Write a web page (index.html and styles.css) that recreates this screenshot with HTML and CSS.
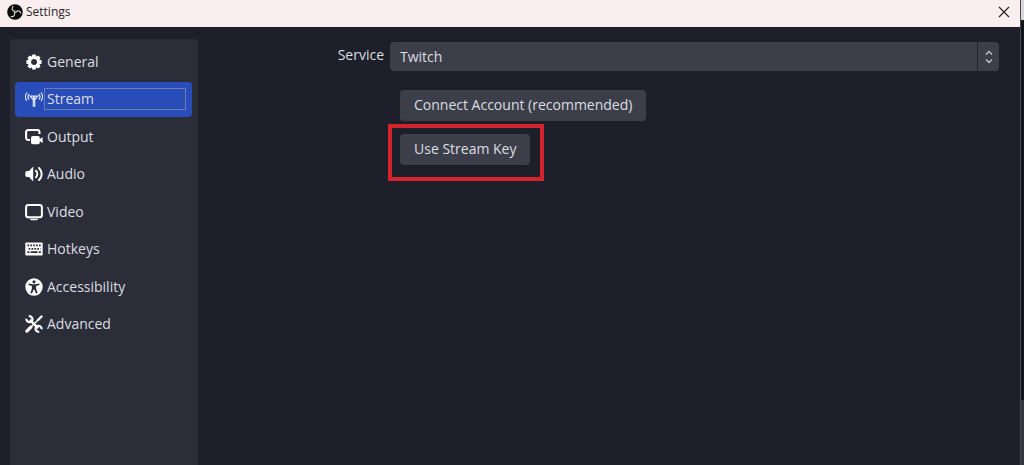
FILE: index.html
```html
<!DOCTYPE html>
<html lang="en">
<head>
    <meta charset="UTF-8">
    <meta name="viewport" content="width=device-width, initial-scale=1.0">
    <title>Settings</title>
    <link rel="stylesheet" href="styles.css">
</head>
<body>
    <div class="window">
        <header class="titleBar">
            <svg class="logo" viewBox="0 0 16 16">
                <circle cx="8" cy="8" r="7.8" fill="#0b0809"/>
                <g fill="none" stroke="#d8d2d4" stroke-width="1.2" stroke-linecap="round">
                    <path id="blade" d="M8 7.200C5.200 7 4.300 4.600 6 2.400"/>
                    <use href="#blade" transform="rotate(120 8 8)"/>
                    <use href="#blade" transform="rotate(240 8 8)"/>
                </g>
            </svg>
            <h1>Settings</h1>
            <button class="close" type="button" aria-label="Close">
                <svg viewBox="0 0 12 12"><path d="M1 1L11 11M11 1L1 11" fill="none" stroke="#2b2426" stroke-width="1.2"/></svg>
            </button>
        </header>

        <div class="content">
            <nav class="sideBar">
                <ul>
                    <li><a href="#general">
                        <svg viewBox="0 0 18 18"><g fill="#fefefe"><path id="tooth" d="M7.300 1.400h3.400l.7 4H6.600zM7.300 16.600h3.400l.7-4H6.600z"/><use href="#tooth" transform="rotate(45 9 9)"/><use href="#tooth" transform="rotate(90 9 9)"/><use href="#tooth" transform="rotate(135 9 9)"/></g><circle cx="9" cy="9" r="4.500" fill="none" stroke="#fefefe" stroke-width="3"/></svg>
                        <span>General</span></a></li>
                    <li><a class="active" href="#stream">
                        <svg viewBox="0 0 18 18"><g fill="none" stroke="#dfe6fb" stroke-width="1.200" stroke-linecap="round"><path d="M5.200 6.200h7.600L9.700 9.800v6.400H8.300V9.800z"/><path d="M9 7v3" stroke-width="2"/><path d="M3.800 4.300c-1 1.500-1 3.400 0 4.900M1.700 3c-1.600 2.200-1.600 5.300 0 7.500M14.200 4.300c1 1.500 1 3.400 0 4.900M16.300 3c1.600 2.200 1.600 5.300 0 7.500"/></g></svg>
                        <span>Stream</span></a></li>
                    <li><a href="#output">
                        <svg viewBox="0 0 18 18"><path d="M5 12H3.500Q1.100 12 1.100 9.500V4.400Q1.100 2 3.500 2h8.600Q14.500 2 14.500 4.400V6" fill="none" stroke="#fefefe" stroke-width="2.100"/><rect x="6" y="8" width="8.800" height="8.200" rx="1.800" fill="#fefefe"/><path d="M14 11.600L17.600 9.200v5.800L14 12.800z" fill="#fefefe"/></svg>
                        <span>Output</span></a></li>
                    <li><a href="#audio">
                        <svg viewBox="0 0 18 18"><path d="M8.200 1.500v15L4 12H2Q.3 12 .3 10V8Q.3 6 2 6h2z" fill="#fefefe"/><path d="M11 5.800c1.700 1.800 1.700 4.600 0 6.400M14 3c3.600 3.400 3.600 8.600 0 12" fill="none" stroke="#fefefe" stroke-width="2" stroke-linecap="round"/></svg>
                        <span>Audio</span></a></li>
                    <li><a href="#video">
                        <svg viewBox="0 0 18 18"><rect x="1.100" y="2.100" width="15.800" height="12.200" rx="2.400" fill="none" stroke="#fefefe" stroke-width="2"/><path d="M4.500 15.800h9l-1.600 1.400H6.100z" fill="#fefefe"/></svg>
                        <span>Video</span></a></li>
                    <li><a href="#hotkeys">
                        <svg viewBox="0 0 18 18"><rect x=".3" y="2.500" width="17.400" height="13" rx="1" fill="#fefefe"/><g fill="none" stroke="#2b2e38" stroke-width="1.700"><path d="M2.400 5.400h13.500" stroke-dasharray="1.700 1.200"/><path d="M3.600 8.800h12" stroke-dasharray="1.700 1.200"/><path d="M2.400 12.200h2M5.600 12.200h7M13.800 12.200h2"/></g></svg>
                        <span>Hotkeys</span></a></li>
                    <li><a href="#accessibility">
                        <svg viewBox="0 0 18 18"><circle cx="9" cy="9" r="8.700" fill="#fefefe"/><g fill="#2b2e38"><circle cx="9" cy="3.800" r="1.600"/><path d="M3.700 5.600L7.500 6.200h3l3.800-.6.200 1.300-3.400 1v2.600l1.500 4.600-1.500.5L9.300 11.500h-.6l-1.800 4.100-1.500-.5 1.500-4.600V7.900l-3.400-1z"/></g></svg>
                        <span>Accessibility</span></a></li>
                    <li><a href="#advanced">
                        <svg viewBox="0 0 18 18"><g fill="none" stroke="#fefefe"><path d="M1.900 16.100L5.800 12.200" stroke-width="3.200" stroke-linecap="round"/><path d="M5.500 12.500L13.500 4.500" stroke-width="1.500"/><path d="M13 5L16.500 1.500" stroke-width="2.400" stroke-linecap="round"/><path d="M4.800 4.800L13.200 13.200" stroke-width="2.400"/><path d="M1.500 3.700A3 3 0 1 0 3.800 1.300M16.500 14.300A3 3 0 1 0 14.200 16.700" stroke-width="2.200"/></g></svg>
                        <span>Advanced</span></a></li>
                </ul>
            </nav>

            <main class="panel">
                <label for="service">Service</label>
                <div class="selectBox">
                    <select id="service">
                        <option>Twitch</option>
                    </select>
                    <div class="arrows">
                        <svg viewBox="0 0 8 14"><path d="M1 4.500L4 1.500l3 3M1 9.500l3 3 3-3" fill="none" stroke="#c3c5ce" stroke-width="1.400"/></svg>
                    </div>
                </div>
                <div class="buttons">
                    <button type="button">Connect Account (recommended)</button>
                    <div class="marked">
                        <button type="button">Use Stream Key</button>
                    </div>
                </div>
            </main>
        </div>
    </div>
    <div class="desktop"></div>
</body>
</html>
```

FILE: styles.css
```css
* {
    box-sizing: border-box;
    margin: 0;
    padding: 0;
}
body {
    display: flex;
    min-height: 100vh;
    background: #1d1f2a;
    color: #dcdde2;
    font-family: "Open Sans", "Noto Sans", sans-serif;
    font-size: 14px;
    line-height: 20px;
}
button, select {
    border: 0;
    color: inherit;
    font: inherit;
}
.window {
    display: flex;
    flex-direction: column;
    flex: 1;
    border-right: 1px solid #454750;
}
.titleBar {
    display: flex;
    align-items: center;
    height: 27px;
    padding: 0 10px 4px 7px;
    background: #f9eff1;
    color: #2b2426;
}
.logo {
    width: 16px;
    height: 16px;
}
.titleBar h1 {
    margin-left: 3px;
    font-size: 12px;
    font-weight: 400;
}
.close {
    display: flex;
    margin-left: auto;
    background: none;
}
.close svg {
    width: 12px;
    height: 12px;
}
.content {
    display: flex;
    flex: 1;
    padding: 12px 21px 0 10px;
}

/* left menu */
.sideBar {
    width: 188px;
    padding: 5px 6px 5px 5px;
    border-radius: 4px 4px 0 0;
    background: #2b2e38;
}
.sideBar ul {
    display: grid;
    grid-auto-rows: 1fr;
    gap: 2px;
    height: 298px;
    list-style-type: none;
}
.sideBar a {
    display: flex;
    align-items: center;
    gap: 1px;
    height: 100%;
    padding: 0 6px 0 10px;
    border-radius: 4px;
    color: inherit;
    text-decoration: none;
}
.sideBar svg {
    width: 18px;
    height: 18px;
}
.sideBar span {
    flex: 1;
    padding: 0 2px;
    border: 1px solid transparent;
}
.sideBar .active {
    background: #284cb8;
}
.sideBar .active span {
    border: 1px solid #6d7cae;
}

/* stream page */
.panel {
    display: grid;
    flex: 1;
    grid-template-columns: 186px 1fr;
    column-gap: 6px;
    row-gap: 19px;
    align-content: start;
    padding-top: 3px;
}
.panel label {
    padding-top: 3px;
    text-align: right;
}
.selectBox {
    position: relative;
}
.selectBox select {
    display: block;
    width: 100%;
    height: 29px;
    padding: 0 32px 0 10px;
    border-radius: 4px;
    background: #3c3f49;
    appearance: none;
}
.arrows {
    position: absolute;
    top: 0;
    right: 0;
    bottom: 0;
    display: flex;
    align-items: center;
    justify-content: center;
    width: 22px;
    border-left: 1px solid #20222c;
    pointer-events: none;
}
.arrows svg {
    width: 8px;
    height: 14px;
}
.buttons {
    grid-column: 2;
    display: flex;
    flex-direction: column;
    align-items: flex-start;
    gap: 13px;
    padding-left: 10px;
}
.buttons button {
    display: block;
    height: 31px;
    padding: 0 14px 1px;
    border-radius: 4px;
    background: #3c3f49;
}
.marked {
    position: relative;
}
.marked::after {
    content: "";
    position: absolute;
    inset: -10px -14px -16px -12px;
    border: 4px solid #d3242e;
    pointer-events: none;
}

/* what is behind the window */
.desktop {
    width: 3px;
    background: linear-gradient(#d9d7d8 20px, #12131a 20px, #12131a 400px, #33353f 400px);
}
```
